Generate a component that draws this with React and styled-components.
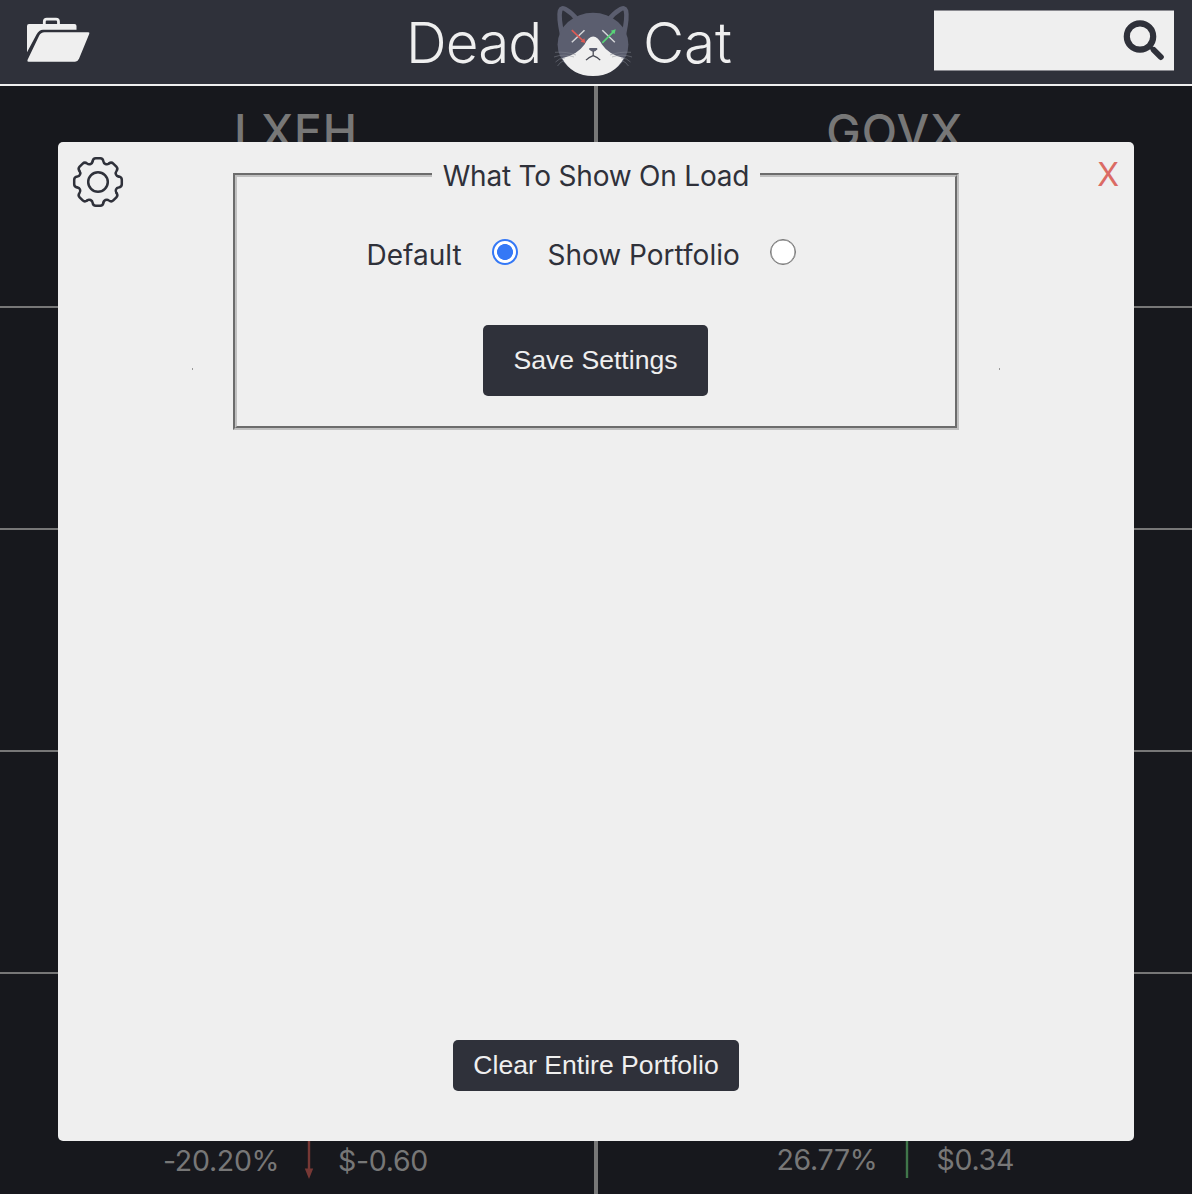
import React from "react";
import styled, { createGlobalStyle } from "styled-components";

const GlobalStyle = createGlobalStyle`
  * { box-sizing: border-box; }
  body { margin: 0; background: #17181d; font-family: Inter, "Liberation Sans", sans-serif; }
`;

const Page = styled.div`
  position: relative;
  display: flex;
  flex-direction: column;
  height: 1194px;
  overflow: hidden;
`;

const Header = styled.header`
  display: grid;
  grid-template-columns: 406px 1fr 240px;
  height: 86px;
  padding-right: 18px;
  background: #2f313a;
  border-bottom: 2px solid #efefef;
`;

const FolderButton = styled.button`
  align-self: start;
  justify-self: start;
  display: flex;
  margin: 17px 0 0 26px;
  padding: 0;
  border: 0;
  background: none;
`;

const Brand = styled.h1`
  display: flex;
  align-items: flex-start;
  margin: 0;
  color: #efefef;
  font-size: 56.5px;
  font-weight: 300;
  line-height: 85px;
  white-space: nowrap;
`;

const BrandWord = styled.span`
  width: ${(p) => p.$width}px;
  letter-spacing: ${(p) => p.$spacing}px;
`;

const CatLogo = styled.svg`
  flex: none;
  width: 84px;
  height: 76px;
  margin: 2px 8px 0 0;
`;

const SearchBox = styled.div`
  display: flex;
  justify-content: flex-end;
  height: 61px;
  margin-top: 10px;
  padding: 8px 9px 0 0;
  background: #efefef;
  border: solid #8a8a90;
  border-width: 1px 0;
`;

const Board = styled.main`
  display: grid;
  grid-template-columns: 594px 1fr;
  grid-auto-rows: 222px;
`;

const Cell = styled.section`
  display: flex;
  flex-direction: column;
  align-items: center;
  border-bottom: 2px solid #777;
  border-left: ${(p) => (p.$divided ? "4px solid #777" : "0")};
`;

const Ticker = styled.h2`
  margin: 19px 0 0;
  padding-right: ${(p) => p.$inset}px;
  color: #777;
  font-size: 46px;
  font-weight: 500;
  line-height: 52px;
  letter-spacing: ${(p) => p.$spacing}px;
`;

const Stats = styled.div`
  display: grid;
  grid-template-columns: ${(p) => p.$columns};
  align-items: end;
  height: 60px;
  margin-top: auto;
  margin-bottom: ${(p) => p.$bottom}px;
  padding-right: ${(p) => p.$inset || 0}px;
  color: #777;
  font-size: 28.5px;
  line-height: 36px;
  white-space: nowrap;
`;

const Figure = styled.span`
  letter-spacing: -0.3px;
`;

const Modal = styled.div`
  position: absolute;
  left: 58px;
  top: 142px;
  display: grid;
  grid-template-columns: 134px 1fr 134px;
  grid-template-rows: 1fr auto;
  width: 1076px;
  height: 999px;
  padding-bottom: 50px;
  background: #efefef;
  border-radius: 5px;
  color: #2f313a;
`;

const Gear = styled.svg`
  width: 52px;
  height: 52px;
  margin: 14px 0 0 14px;
`;

const CloseButton = styled.button`
  align-self: start;
  justify-self: end;
  margin: 13px 15px 0 0;
  padding: 0;
  border: 0;
  background: none;
  color: #db6b64;
  font-family: inherit;
  font-size: 32px;
  line-height: 40px;
`;

const FormRow = styled.form`
  display: grid;
  grid-template-columns: 1px 726px 1px;
  justify-content: space-between;
  align-items: start;
  padding-top: 16px;
`;

const Speck = styled.i`
  height: 2px;
  margin-top: 210px;
  background: #999;
`;

const Fieldset = styled.fieldset`
  display: flex;
  flex-direction: column;
  align-items: center;
  min-width: 0;
  height: 272px;
  margin: 0;
  padding: 0;
  border: 4px groove #c0c0c0;
`;

const Legend = styled.legend`
  width: 328px;
  margin: 0 auto;
  padding: 2px 0 0;
  text-align: center;
  font-size: 28px;
  line-height: 32px;
  letter-spacing: -0.2px;
  white-space: nowrap;
`;

const Options = styled.div`
  display: flex;
  width: 459px;
  height: 40px;
  margin: 43px 0 50px 0;
`;

const Option = styled.label`
  display: flex;
  justify-content: space-between;
  width: ${(p) => p.$width}px;
  margin-right: 30px;
  font-size: 28px;
  line-height: 40px;
  letter-spacing: 0;
  white-space: nowrap;
`;

const Radio = styled.input`
  appearance: none;
  width: 26px;
  height: 26px;
  margin: 4px 0 0;
  border: 1.5px solid #767676;
  box-shadow: inset 0 0 0 0.5px #767676;
  border-radius: 50%;
  background: #fff;
  &:checked {
    border: 2px solid #3478f6;
    box-shadow: none;
    background: radial-gradient(circle, #3478f6 7.6px, #fff 8.3px);
  }
`;

const DarkButton = styled.button`
  width: ${(p) => p.$width}px;
  height: ${(p) => p.$height}px;
  padding: 0 0 ${(p) => p.$lift}px;
  border: 0;
  border-radius: 5px;
  background: #2f313a;
  color: #efefef;
  font-family: "Liberation Sans", Arial, sans-serif;
  font-size: 26.6px;
  line-height: 30px;
  white-space: nowrap;
`;

const SaveButton = styled(DarkButton)`
  margin-right: 1px;
`;

const Footer = styled.div`
  grid-column: 1 / -1;
  display: flex;
  justify-content: center;
`;

const FolderIcon = () => (
  <svg width="65" height="47" viewBox="26 17 65 47" fill="#efefef">
    <path d="M27 52.3V26Q27 24 29 24H74.5Q76.5 24 76.5 26V29.8H43Q39 29.8 36.5 34.5Z" />
    <path d="M44.3 25V21.7Q44.3 19.2 46.8 19.2H56Q58.5 19.2 58.5 21.7V25" fill="none" stroke="#efefef" strokeWidth="2.8" />
    <path d="M44.5 32.3H88.4Q90 32.3 89.2 34L79 58.8Q77.7 61.8 75 61.8H28.5Q26.7 61.8 27.6 59.8L39 36Q40.8 32.3 44.5 32.3Z" />
  </svg>
);

const CatIcon = () => (
  <CatLogo viewBox="551 2 84 76" fill="none">
    <path d="M562 34Q558.5 17 560 11Q561.5 6.5 566 9.5Q572 13 577.5 20M624 34Q627.5 17 626 11Q624.5 6.5 620 9.5Q614 13 608.5 20" stroke="#5b5e6f" strokeWidth="4.6" />
    <ellipse cx="593" cy="44.4" rx="35.4" ry="31.6" fill="#5b5e6f" />
    <path d="M562 58.2Q577 55 584.5 44.5Q588.5 36.5 593.2 36.5Q597.8 36.5 602 44.5Q609 55 624 58Q614 76 593 76Q572 76 562 58.2Z" fill="#efefef" />
    <g stroke="#858894" strokeWidth=".65" opacity=".75">
      <path d="M555 52.3Q567 51.5 576 55M554 57Q564 53.3 574 57M555.5 62Q559 58 565 58M557.5 66Q560 62 564 60.5M631 52.3Q619 51.5 610 55M632 57Q622 53.3 612 57M630.5 62Q627 58 621 58M628.5 66Q626 62 622 60.5" />
    </g>
    <path d="M584.5 30.2L571.8 42.3M602.3 30.2L614.8 42.3" stroke="#d4d5d8" strokeWidth="1.5" />
    <path d="M571.8 30.2L583.8 41.5" stroke="#df5a54" strokeWidth="1.7" />
    <path d="M585.3 43L580.6 41.8L584.3 38.2Z" fill="#df5a54" />
    <path d="M602.3 42.8L614 31.2" stroke="#58d477" strokeWidth="1.7" />
    <path d="M615.8 29.3L610.8 30.7L614.4 34.3Z" fill="#58d477" />
    <path d="M589.3 48H597.2V49.3Q596 51.7 593.3 51.7Q590.5 51.7 589.3 49.3Z" fill="#5b5e6f" />
    <path d="M593.2 51V55.5M586 60.2Q588.5 57.5 593.2 55.7Q598 57.5 600.2 60.2" stroke="#464852" strokeWidth="1.25" />
  </CatLogo>
);

const SearchIcon = () => (
  <svg width="43" height="43" viewBox="1122 19 43 43" fill="none" stroke="#2f313a">
    <circle cx="1140" cy="36.5" r="13.2" strokeWidth="6.2" />
    <path d="M1149 45.5L1155 51.5" strokeWidth="3.8" />
    <path d="M1153.8 50L1160.8 57" strokeWidth="6" strokeLinecap="round" />
  </svg>
);

const gearTooth =
  "M-5.4-20.6Q-5-23.8-2.2-23.8H2.2Q5-23.8 5.4-20.6C5.6-18.2 8.9-16.8 10.75-18.38";

const GearIcon = () => (
  <Gear viewBox="-26 -26 52 52" fill="none" stroke="#2f313a" strokeWidth="2.5" strokeLinecap="round">
    {[0, 45, 90, 135, 180, 225, 270, 315].map((a) => (
      <path key={a} d={gearTooth} transform={`rotate(${a})`} />
    ))}
    <circle r="9.8" />
  </Gear>
);

const DownArrow = () => (
  <svg width="10" height="60" viewBox="0 0 10 60">
    <path d="M5 0V52" stroke="#773835" strokeWidth="2.4" />
    <path d="M.8 49.5H9.2L5 60Z" fill="#773835" />
  </svg>
);

const UpArrow = () => (
  <svg width="10" height="60" viewBox="0 0 10 60">
    <path d="M5 8V60" stroke="#40764a" strokeWidth="2.4" />
    <path d="M.8 10.5H9.2L5 0Z" fill="#40764a" />
  </svg>
);

export default function App() {
  return (
    <Page>
      <GlobalStyle />
      <Header>
        <FolderButton aria-label="Portfolio"><FolderIcon /></FolderButton>
        <Brand>
          <BrandWord $width={145} $spacing={-0.9}>Dead</BrandWord>
          <CatIcon />
          <BrandWord $width={90} $spacing={-0.1}>Cat</BrandWord>
        </Brand>
        <SearchBox><SearchIcon /></SearchBox>
      </Header>
      <Board>
        <Cell><Ticker $spacing={0.9} $inset={2}>LXEH</Ticker></Cell>
        <Cell $divided><Ticker $spacing={1.1} $inset={0}>GOVX</Ticker></Cell>
        <Cell /><Cell $divided />
        <Cell /><Cell $divided />
        <Cell /><Cell $divided />
        <Cell>
          <Stats $columns="141px 34px 90px" $bottom={15} $inset={3}>
            <Figure>-20.20%</Figure><DownArrow /><Figure>$-0.60</Figure>
          </Stats>
        </Cell>
        <Cell $divided>
          <Stats $columns="125px 35px 77px" $bottom={16}>
            <Figure>26.77%</Figure><UpArrow /><Figure>$0.34</Figure>
          </Stats>
        </Cell>
      </Board>
      <Modal>
        <GearIcon />
        <FormRow>
          <Speck />
          <Fieldset>
            <Legend>What To Show On Load</Legend>
            <Options>
              <Option $width={151}>Default<Radio type="radio" name="load" defaultChecked /></Option>
              <Option $width={248}>Show Portfolio<Radio type="radio" name="load" /></Option>
            </Options>
            <SaveButton type="button" $width={225} $height={71} $lift={2}>Save Settings</SaveButton>
          </Fieldset>
          <Speck />
        </FormRow>
        <CloseButton>X</CloseButton>
        <Footer>
          <DarkButton $width={286} $height={51} $lift={2}>Clear Entire Portfolio</DarkButton>
        </Footer>
      </Modal>
    </Page>
  );
}
